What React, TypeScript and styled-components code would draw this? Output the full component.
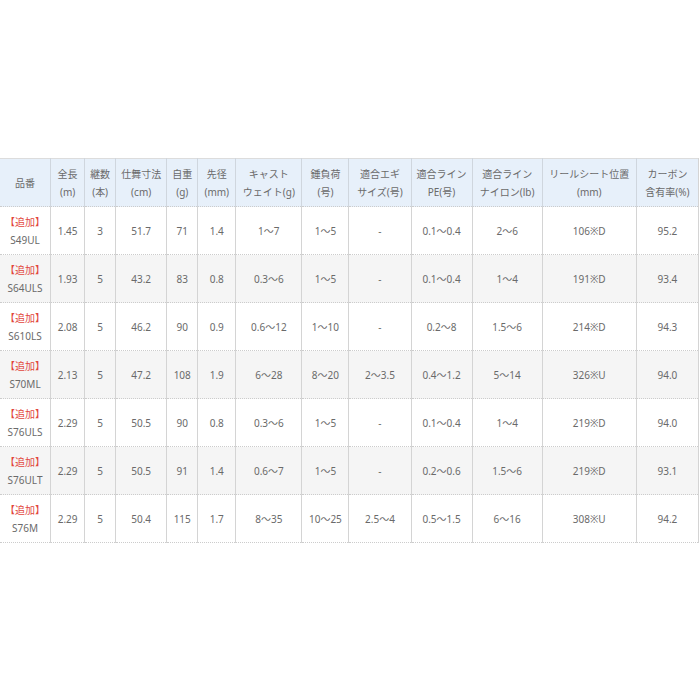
import React from "react";
import styled, { createGlobalStyle } from "styled-components";

const GlobalStyle = createGlobalStyle`
  html, body {
    margin: 0;
    padding: 0;
    background: #ffffff;
  }
`;

const Page = styled.div`
  width: 700px;
  height: 700px;
  padding-top: 158px;
  box-sizing: border-box;
  overflow: hidden;
  font-family: "Noto Sans", "Noto Sans CJK JP", sans-serif;
`;

const SpecTable = styled.table`
  width: 699px;
  border-collapse: collapse;
  table-layout: fixed;
  color: #6a6a6a;
  font-size: 10px;
  line-height: 18px;
  border-top: 1px solid #dcdcdc;
`;

const HeadCell = styled.th<{ $w: number }>`
  width: ${(p) => p.$w - 1}px;
  height: 47px;
  padding: 0;
  background: #e7f0fa;
  font-weight: normal;
  text-align: center;
  vertical-align: middle;
  white-space: nowrap;
  border-left: 1px solid #cfd6de;
  border-bottom: 1px dotted #cccccc;
  &:first-child {
    border-left: none;
  }
  &:last-child {
    border-right: 1px solid #d4d4d4;
  }
`;

const Row = styled.tr<{ $alt: boolean }>`
  background: ${(p) => (p.$alt ? "#f5f5f5" : "#ffffff")};
`;

const Cell = styled.td`
  height: 47px;
  padding: 0;
  text-align: center;
  vertical-align: middle;
  white-space: nowrap;
  border-left: 1px solid #d4d4d4;
  border-bottom: 1px dotted #cccccc;
  &:first-child {
    border-left: none;
  }
  &:last-child {
    border-right: 1px solid #d4d4d4;
  }
`;

const AddedTag = styled.span`
  display: block;
  color: #e2453c;
`;

const cols: [string, string, number][] = [
  ["品番", "", 51],
  ["全長", "(m)", 34],
  ["継数", "(本)", 31],
  ["仕舞寸法", "(cm)", 51],
  ["自重", "(g)", 31],
  ["先径", "(mm)", 38],
  ["キャスト", "ウェイト(g)", 66],
  ["錘負荷", "(号)", 47],
  ["適合エギ", "サイズ(号)", 62],
  ["適合ライン", "PE(号)", 61],
  ["適合ライン", "ナイロン(lb)", 70],
  ["リールシート位置", "(mm)", 94],
  ["カーボン", "含有率(%)", 62],
];

const rows: string[][] = [
  ["S49UL", "1.45", "3", "51.7", "71", "1.4", "1~7", "1~5", "-", "0.1~0.4", "2~6", "106※D", "95.2"],
  ["S64ULS", "1.93", "5", "43.2", "83", "0.8", "0.3~6", "1~5", "-", "0.1~0.4", "1~4", "191※D", "93.4"],
  ["S610LS", "2.08", "5", "46.2", "90", "0.9", "0.6~12", "1~10", "-", "0.2~8", "1.5~6", "214※D", "94.3"],
  ["S70ML", "2.13", "5", "47.2", "108", "1.9", "6~28", "8~20", "2~3.5", "0.4~1.2", "5~14", "326※U", "94.0"],
  ["S76ULS", "2.29", "5", "50.5", "90", "0.8", "0.3~6", "1~5", "-", "0.1~0.4", "1~4", "219※D", "94.0"],
  ["S76ULT", "2.29", "5", "50.5", "91", "1.4", "0.6~7", "1~5", "-", "0.2~0.6", "1.5~6", "219※D", "93.1"],
  ["S76M", "2.29", "5", "50.4", "115", "1.7", "8~35", "10~25", "2.5~4", "0.5~1.5", "6~16", "308※U", "94.2"],
];

const App = () => {
  return (
    <Page>
      <GlobalStyle />
      <SpecTable>
        <thead>
          <tr>
            {cols.map(([a, b, w], i) => (
              <HeadCell key={i} $w={w}>
                {a}
                {b && <br />}
                {b}
              </HeadCell>
            ))}
          </tr>
        </thead>
        <tbody>
          {rows.map((r, i) => (
            <Row key={r[0]} $alt={i % 2 === 1}>
              {r.map((v, j) => (
                <Cell key={j}>
                  {j === 0 ? (
                    <>
                      <AddedTag>【追加】</AddedTag>
                      {v}
                    </>
                  ) : (
                    v.replace(/~/g, "～")
                  )}
                </Cell>
              ))}
            </Row>
          ))}
        </tbody>
      </SpecTable>
    </Page>
  );
};

export default App;
